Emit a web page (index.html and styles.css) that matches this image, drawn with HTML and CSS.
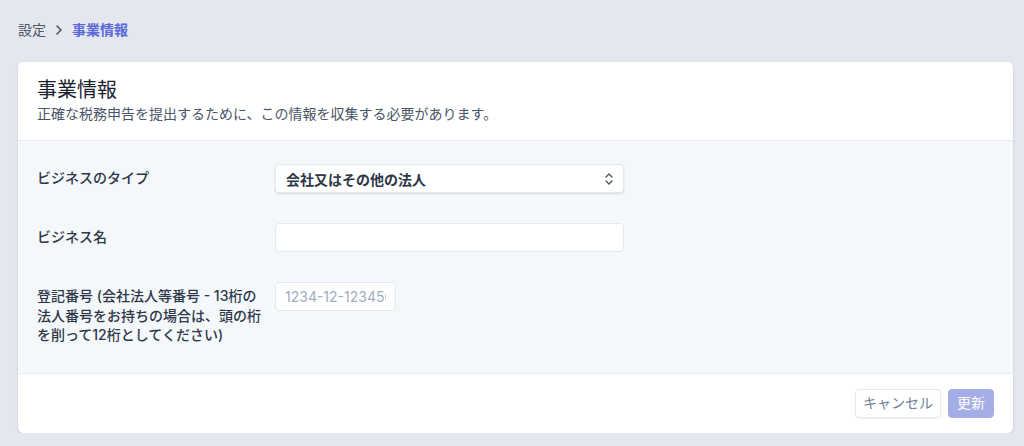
FILE: index.html
```html
<!DOCTYPE html>
<html lang="ja">

<head>
    <meta charset="UTF-8">
    <meta name="viewport" content="width=device-width, initial-scale=1.0">
    <title>事業情報</title>
    <link rel="stylesheet" href="styles.css">
</head>

<body>
    <nav class="breadcrumb">
        <a href="" class="breadcrumb__link">設定</a>
        <svg class="breadcrumb__sep" width="14" height="16" viewBox="0 0 14 16">
            <path d="M5 4l4 4-4 4" fill="none" stroke="#4a5568" stroke-width="1.6" stroke-linecap="round" stroke-linejoin="round" />
        </svg>
        <span class="breadcrumb__current">事業情報</span>
    </nav>
    <main class="card">
        <header class="card__header">
            <h1 class="card__title">事業情報</h1>
            <p class="card__desc">正確な税務申告を提出するために、この情報を収集する必要があります。</p>
        </header>
        <section class="card__body">
            <div class="form-row">
                <label class="form-label">ビジネスのタイプ</label>
                <div class="select">
                    <span>会社又はその他の法人</span>
                    <svg width="12" height="14" viewBox="0 0 12 14">
                        <path d="M3 5l3-3 3 3M3 9l3 3 3-3" fill="none" stroke="#4a5568" stroke-width="1.4" stroke-linecap="round" stroke-linejoin="round" />
                    </svg>
                </div>
            </div>
            <div class="form-row">
                <label class="form-label">ビジネス名</label>
                <input class="input" type="text">
            </div>
            <div class="form-row">
                <label class="form-label">登記番号 (会社法人等番号 - 13桁の法人番号をお持ちの場合は、頭の桁を削って12桁としてください)</label>
                <input class="input input--short" type="text" placeholder="1234-12-123456">
            </div>
        </section>
        <footer class="card__footer">
            <button class="btn btn--white">キャンセル</button>
            <button class="btn btn--primary" disabled>更新</button>
        </footer>
    </main>
</body>
</html>
```

FILE: styles.css
```css
* {
    box-sizing: border-box;
}

body {
    margin: 0;
    padding: 0 11px 0 18px;
    background-color: #e4e7ee;
    font-family: "Inter", "Noto Sans CJK JP", sans-serif;
    font-size: 14px;
    color: #2d3748;
}

.breadcrumb {
    display: flex;
    align-items: center;
    gap: 6px;
    height: 58px;
    padding-top: 1px;
    font-size: 14px;
    line-height: 20px;
}

.breadcrumb__link {
    color: #4a5568;
    text-decoration: none;
}

.breadcrumb__current {
    color: #5a67d8;
    font-weight: 700;
}

.card {
    margin-top: 4px;
    background-color: white;
    border-radius: 5px;
    box-shadow: 0 1px 3px rgba(0, 0, 0, .1), 0 1px 2px rgba(0, 0, 0, .06);
    overflow: hidden;
}

.card__header {
    padding: 14px 19px 16px;
    border-bottom: 1px solid #e8ecf1;
}

.card__title {
    margin: 0;
    font-size: 20px;
    line-height: 28px;
    font-weight: 400;
    color: #1a202c;
}

.card__desc {
    margin: 0;
    font-size: 14px;
    line-height: 20px;
    color: #4a5568;
}

.card__body {
    display: flex;
    flex-direction: column;
    gap: 30px;
    padding: 23px 19px 28px;
    background-color: #f5f8fb;
    border-bottom: 1px solid #e8ecf1;
}

.form-row {
    display: grid;
    grid-template-columns: 226px 349px;
    column-gap: 12px;
    align-items: start;
}

.form-label {
    padding-top: 4px;
    font-weight: 500;
    line-height: 19.5px;
    color: #2d3748;
}

.select {
    display: flex;
    justify-content: space-between;
    align-items: center;
    height: 29px;
    padding: 0 8px 0 10px;
    background-color: white;
    border: 1px solid #e2e8f0;
    border-radius: 4px;
    box-shadow: 0 1px 2px rgba(0, 0, 0, .12);
    font-weight: 600;
    color: #2d3748;
}

.input {
    height: 29px;
    width: 100%;
    padding: 0 9px;
    background-color: white;
    border: 1px solid #e2e8f0;
    border-radius: 4px;
    font-family: inherit;
    font-size: 14px;
    color: #2d3748;
}

.input::placeholder {
    color: #a0aec0;
}

.input--short {
    width: 121px;
}

.card__footer {
    display: flex;
    justify-content: flex-end;
    gap: 7px;
    padding: 15px 19px 15px;
}

.btn {
    height: 29px;
    padding: 0 7px;
    border-radius: 4px;
    font-family: inherit;
    font-size: 14px;
    line-height: 20px;
}

.btn--white {
    background-color: white;
    border: 1px solid #e2e8f0;
    color: #718096;
    box-shadow: 0 1px 2px rgba(0, 0, 0, .05);
}

.btn--primary {
    padding: 0 8px;
    background-color: #a5ade6;
    border: 1px solid #a5ade6;
    color: white;
}
```
